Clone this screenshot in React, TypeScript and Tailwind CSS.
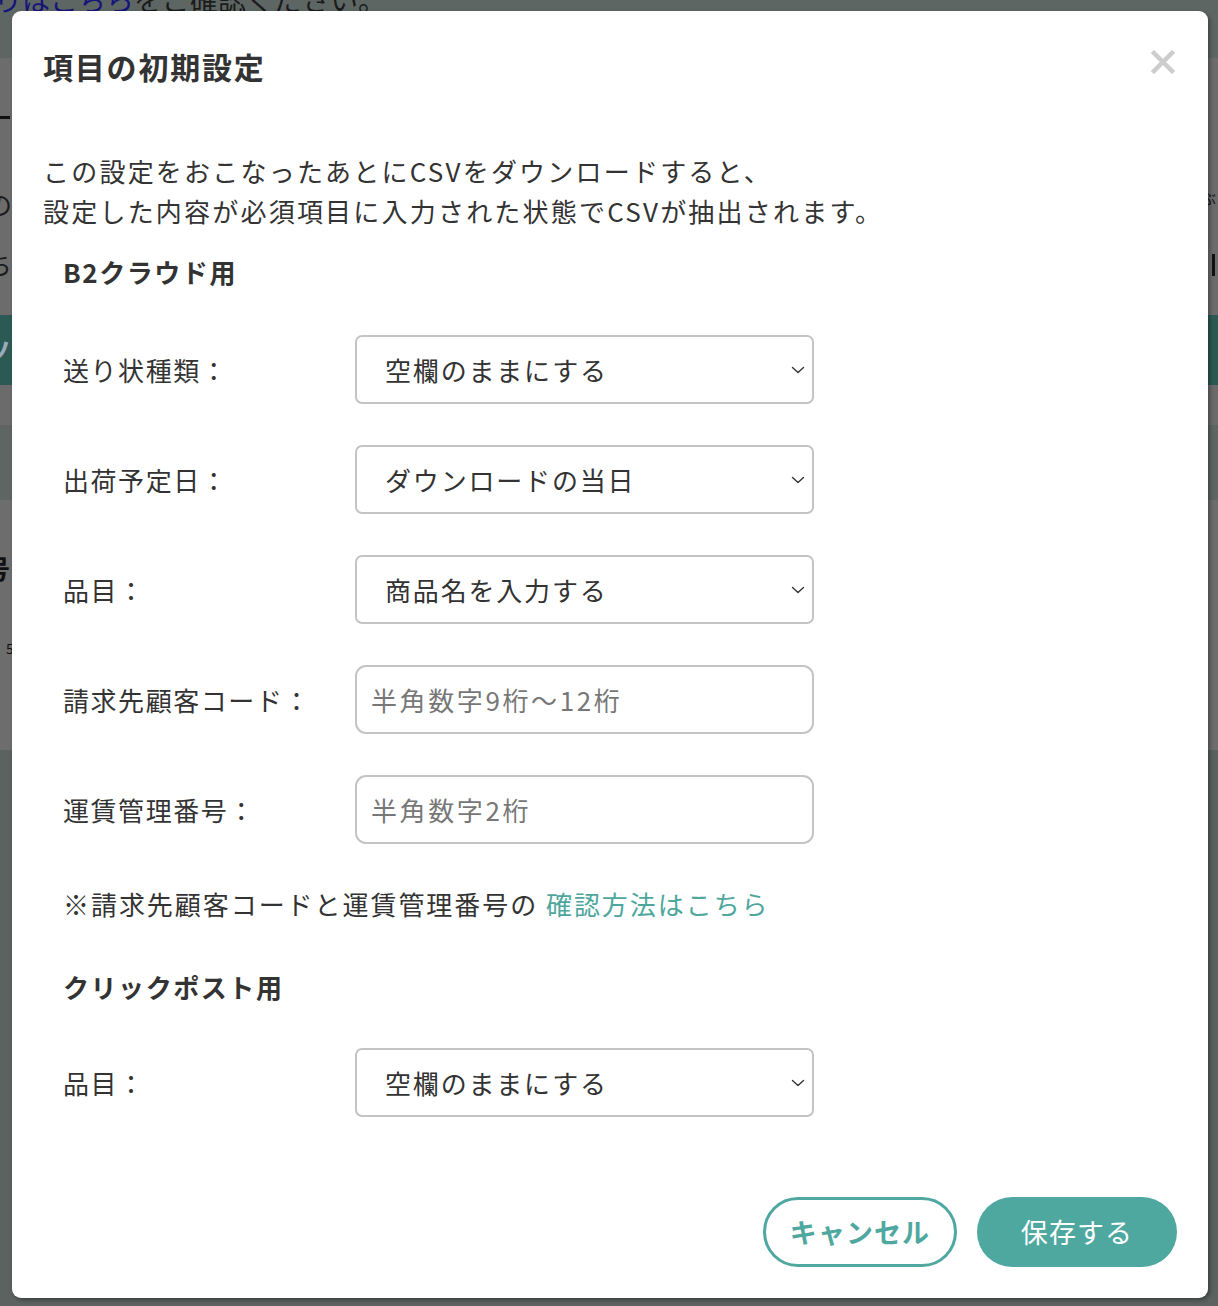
import React from 'react';

const font = { fontFamily: '"Noto Sans CJK JP", "Noto Sans", sans-serif' };

function Chevron() {
  return (
    <svg width="14" height="8" viewBox="0 0 14 8" fill="none" className="shrink-0">
      <path d="M1.5 1.5L7 6.5L12.5 1.5" stroke="#333" strokeWidth="1.4" strokeLinecap="round" strokeLinejoin="round" />
    </svg>
  );
}

function SelectRow({ label, value }: { label: string; value: string }) {
  return (
    <div className="flex items-center">
      <div className="w-[292px] text-[26px] leading-[40px] tracking-[0.06em] text-[#333]">{label}</div>
      <div className="w-[459px] h-[69px] border-2 border-[#c4c4c4] rounded-[7px] flex items-center justify-between pl-[28px] pr-[7px]">
        <span className="text-[26px] tracking-[0.07em] text-[#333]">{value}</span>
        <Chevron />
      </div>
    </div>
  );
}

function InputRow({ label, placeholder }: { label: string; placeholder: string }) {
  return (
    <div className="flex items-center">
      <div className="w-[292px] text-[26px] leading-[40px] tracking-[0.06em] text-[#333]">{label}</div>
      <div className="w-[459px] h-[69px] border-2 border-[#c4c4c4] rounded-[11px] flex items-center pl-[14px]">
        <span className="text-[26px] tracking-[0.1em] text-[#777]">{placeholder}</span>
      </div>
    </div>
  );
}

export default function App() {
  return (
    <div className="relative w-[1218px] h-[1306px] overflow-hidden bg-[#6c6c6c]" style={font}>
      {/* dimmed page behind the modal */}
      <div className="flex flex-col h-full">
        <div className="h-[58px] bg-[#5e6664] relative">
          <div className="absolute left-[-6px] top-[-22px] text-[28px] whitespace-nowrap">
            <span className="text-[#15157a]">りはこちら</span>
            <span className="text-[#1c1c1c]">をご確認ください。</span>
          </div>
        </div>
        <div className="h-[257px] bg-[#6c6c6c] relative">
          <div className="absolute left-0 top-[58px] w-[10px] h-[3px] bg-[#111]" />
          <div className="absolute left-[-14px] top-[126px] text-[26px] text-[#1c1c1c]">の</div>
          <div className="absolute left-[-14px] top-[186px] text-[26px] text-[#1c1c1c]">ち</div>
          <div className="absolute right-[2px] top-[130px] text-[14px] text-[#111]">ぶ</div>
          <div className="absolute right-[3px] top-[196px] w-[3px] h-[22px] bg-[#111]" />
        </div>
        <div className="h-[70px] bg-[#2b5a55] relative">
          <div className="absolute left-[-16px] top-[15px] text-[26px] font-bold text-[#9ab]">ツ</div>
        </div>
        <div className="h-[40px] bg-[#6b6b6b]" />
        <div className="h-[75px] bg-[#5f6563]" />
        <div className="h-[250px] bg-[#6d6d6d] relative">
          <div className="absolute left-[-16px] top-[48px] text-[26px] font-bold text-[#111]">号</div>
          <div className="absolute left-[6px] top-[138px] text-[14px] text-[#111]">5</div>
        </div>
        <div className="flex-1 bg-[#5b6260]" />
      </div>

      {/* modal */}
      <div className="absolute left-[12px] top-[11px] w-[1196px] h-[1287px] bg-white rounded-[9px] shadow-[2px_2px_4px_rgba(0,0,0,0.35)] flex flex-col px-[31px] pt-[35px] text-[#333]">
        <div className="flex items-start justify-between">
          <h1 className="text-[30px] leading-[40px] font-bold tracking-[0.06em] text-[#333]">項目の初期設定</h1>
          <svg width="24" height="24" viewBox="0 0 24 24" className="mt-[4px] mr-[2px]">
            <path d="M3 3L21 21M21 3L3 21" stroke="#cdcdcd" strokeWidth="4.5" strokeLinecap="square" />
          </svg>
        </div>

        <p className="mt-[65px] text-[26px] leading-[40px] tracking-[0.085em] text-[#333]">
          この設定をおこなったあとにCSVをダウンロードすると、
          <br />
          設定した内容が必須項目に入力された状態でCSVが抽出されます。
        </p>

        <div className="pl-[20px] flex flex-col">
          <h2 className="mt-[21px] text-[26px] leading-[40px] font-bold tracking-[0.06em]">B2クラウド用</h2>

          <div className="mt-[43px] flex flex-col gap-[41px]">
            <SelectRow label="送り状種類：" value="空欄のままにする" />
            <SelectRow label="出荷予定日：" value="ダウンロードの当日" />
            <SelectRow label="品目：" value="商品名を入力する" />
            <InputRow label="請求先顧客コード：" placeholder="半角数字9桁〜12桁" />
            <InputRow label="運賃管理番号：" placeholder="半角数字2桁" />
          </div>

          <p className="mt-[40px] text-[26px] leading-[40px] tracking-[0.075em] text-[#333]">
            ※請求先顧客コードと運賃管理番号の <span className="text-[#4ea79d]">確認方法はこちら</span>
          </p>

          <h2 className="mt-[43px] text-[26px] leading-[40px] font-bold tracking-[0.06em]">クリックポスト用</h2>

          <div className="mt-[41px]">
            <SelectRow label="品目：" value="空欄のままにする" />
          </div>
        </div>

        <div className="mt-[80px] flex justify-end gap-[20px]">
          <button className="w-[194px] h-[70px] rounded-full border-[3px] border-[#4fa8a0] text-[#4fa8a0] text-[27px] font-bold tracking-[0.04em] flex items-center justify-center">
            キャンセル
          </button>
          <button className="w-[200px] h-[70px] rounded-full bg-[#4fa8a0] text-white text-[27px] tracking-[0.04em] flex items-center justify-center">
            保存する
          </button>
        </div>
      </div>
    </div>
  );
}
